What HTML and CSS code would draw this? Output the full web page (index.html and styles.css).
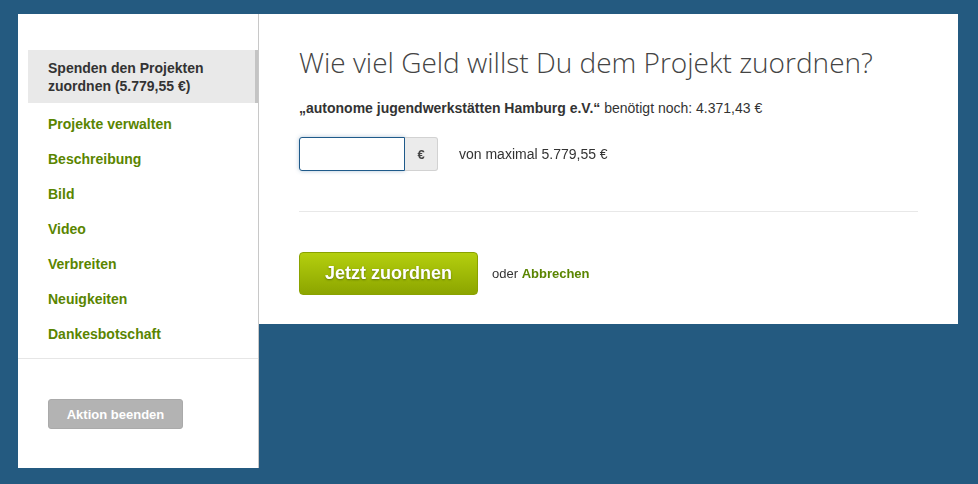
FILE: index.html
```html
<!DOCTYPE html>
<html lang="de">

<head>
  <meta charset="UTF-8" />
  <title>Spenden zuordnen</title>
  <link rel="stylesheet" href="styles.css">
</head>

<body>
  <div class="page">
    <aside class="sidebar">
      <nav class="side-nav">
        <a class="nav-item active" href="#">Spenden den Projekten zuordnen (5.779,55 €)</a>
        <a class="nav-item" href="#">Projekte verwalten</a>
        <a class="nav-item" href="#">Beschreibung</a>
        <a class="nav-item" href="#">Bild</a>
        <a class="nav-item" href="#">Video</a>
        <a class="nav-item" href="#">Verbreiten</a>
        <a class="nav-item" href="#">Neuigkeiten</a>
        <a class="nav-item" href="#">Dankesbotschaft</a>
      </nav>
      <div class="side-footer">
        <button class="btn-grey" type="button">Aktion beenden</button>
      </div>
    </aside>

    <main class="panel">
      <h1>Wie viel Geld willst Du dem Projekt zuordnen?</h1>
      <p class="needs"><strong>„autonome jugendwerkstätten Hamburg e.V.“</strong> benötigt noch: 4.371,43 €</p>

      <div class="amount-row">
        <div class="input-group">
          <input type="text" class="amount-input" value="" autofocus />
          <span class="addon">€</span>
        </div>
        <span class="max-hint">von maximal 5.779,55 €</span>
      </div>

      <hr class="divider" />

      <div class="actions">
        <button class="btn-green" type="button">Jetzt zuordnen</button>
        <span class="cancel">oder <a href="#">Abbrechen</a></span>
      </div>
    </main>
  </div>
</body>

</html>
```

FILE: styles.css
```css
body {
  margin: 0;
  padding: 14px 0 0 18px;
  background-color: #245a80;
  font-family: 'Liberation Sans', Arial, Helvetica, sans-serif;
  color: #333;
}

.page {
  display: flex;
  align-items: flex-start;
}

.sidebar {
  width: 240px;
  background: white;
  border-right: 1px solid #c8c8c8;
  padding-top: 36px;
}

.side-nav {
  display: flex;
  flex-direction: column;
  padding-bottom: 6px;
  border-bottom: 1px solid #e6e6e6;
}

.nav-item {
  display: block;
  padding: 9px 20px 9px 30px;
  font-size: 14px;
  line-height: 17px;
  font-weight: bold;
  color: #5a8500;
  text-decoration: none;
}

.nav-item.active {
  margin-left: 10px;
  margin-bottom: 4px;
  padding: 9px 20px 8px 20px;
  line-height: 18px;
  color: #333;
  background: #e9e9e9;
  border-right: 3px solid #c4c4c4;
}

.side-footer {
  padding: 40px 30px 39px;
}

.btn-grey {
  width: 135px;
  height: 30px;
  border: 1px solid #aaa;
  border-radius: 3px;
  background: #b3b3b3;
  color: white;
  font-family: inherit;
  font-size: 13px;
  font-weight: bold;
  padding: 0;
}

.panel {
  width: 619px;
  background: white;
  padding: 30px 40px 29px;
}

.panel h1 {
  margin: 0;
  font-family: 'Open Sans', sans-serif;
  font-weight: 300;
  font-size: 28px;
  line-height: 36px;
  color: #444;
}

.needs {
  margin: 19px 0 0;
  font-size: 14px;
  line-height: 18px;
}

.amount-row {
  display: flex;
  align-items: center;
  margin-top: 20px;
}

.input-group {
  display: flex;
}

.amount-input {
  box-sizing: border-box;
  width: 106px;
  height: 34px;
  border: 1px solid #1f5a8a;
  border-radius: 3px 0 0 3px;
  padding: 0 12px;
  font-size: 14px;
  outline: none;
  box-shadow: 0 0 4px rgba(31, 90, 138, 0.35);
}

.addon {
  box-sizing: border-box;
  width: 33px;
  height: 34px;
  display: flex;
  align-items: center;
  justify-content: center;
  background: #ebebeb;
  border: 1px solid #d2d2d2;
  border-left: none;
  border-radius: 0 3px 3px 0;
  font-size: 13px;
  font-weight: bold;
  color: #444;
}

.max-hint {
  margin-left: 21px;
  font-size: 14px;
}

.divider {
  margin: 40px 0 0;
  border: none;
  border-top: 1px solid #e8e8e8;
}

.actions {
  display: flex;
  align-items: center;
  margin-top: 40px;
}

.btn-green {
  width: 179px;
  height: 43px;
  border: 1px solid #8aa200;
  border-radius: 4px;
  background: linear-gradient(#b4cf0e, #8ca500);
  color: white;
  font-family: inherit;
  font-size: 18px;
  font-weight: bold;
  text-shadow: 0 1px 2px rgba(60, 80, 0, 0.6);
  padding: 0;
}

.cancel {
  margin-left: 14px;
  font-size: 13px;
  color: #333;
}

.cancel a {
  color: #5a8500;
  font-weight: bold;
  text-decoration: none;
}
```
